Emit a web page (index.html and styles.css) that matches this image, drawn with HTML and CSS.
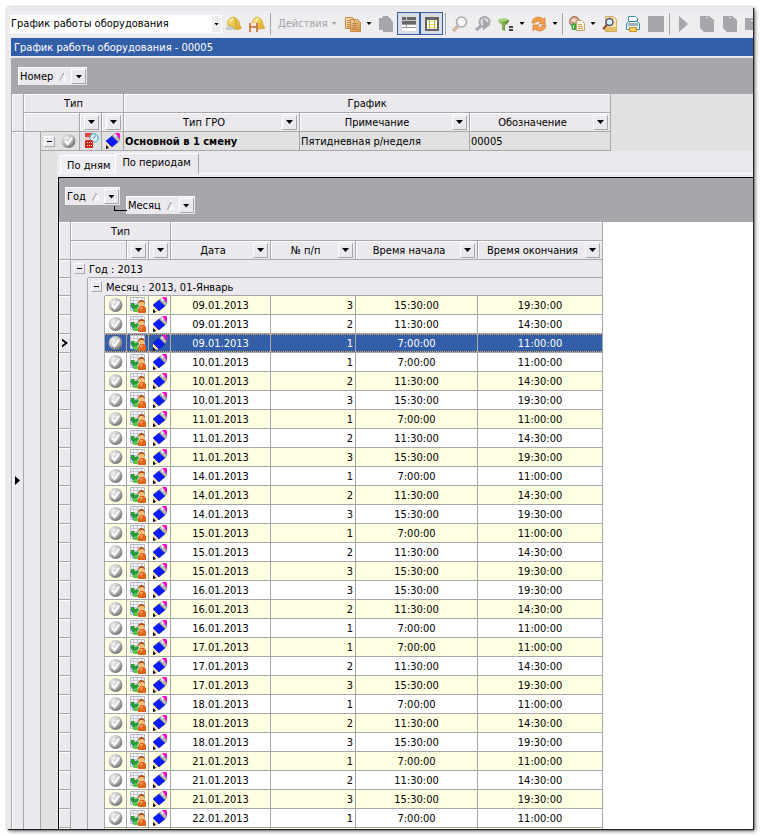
FILE: index.html
```html
<!DOCTYPE html>
<html lang="ru">
<head>
<meta charset="utf-8">
<title>График работы оборудования</title>
<link rel="stylesheet" href="styles.css">
</head>
<body>
<svg class="sprite" aria-hidden="true">
  <defs>
    <radialGradient id="ball" cx=".35" cy=".3" r=".75"><stop offset="0" stop-color="#f4f4f4"/><stop offset=".55" stop-color="#bcbcbc"/><stop offset="1" stop-color="#6c6c6c"/></radialGradient>
    <linearGradient id="gold" x1="0" y1="0" x2="1" y2="1"><stop offset="0" stop-color="#fce9c2"/><stop offset="1" stop-color="#cf9243"/></linearGradient>
    <linearGradient id="leaf" x1="0" y1="0" x2="1" y2="0"><stop offset="0" stop-color="#b6d78a"/><stop offset="1" stop-color="#467a22"/></linearGradient>
    <linearGradient id="dome" x1="0" y1="0" x2="1" y2="1"><stop offset="0" stop-color="#fbe98c"/><stop offset="1" stop-color="#d9a01c"/></linearGradient>
  </defs>
  <symbol id="i-ok" viewBox="0 0 16 16"><circle cx="7.500" cy="8" r="6.900" fill="url(#ball)"/><path d="M4 8l2.600 3.200L11.200 4.500" fill="none" stroke="#fff" stroke-width="2"/></symbol>
  <symbol id="i-plan" viewBox="0 0 16 16"><path fill="#f5f5fb" stroke="#b9b9c6" d="M.5.500h14v13H.5z"/><path stroke="#c9c9d6" d="M3.500 1v12M7.500 1v8M11.500 1v6M1 3.500h13M1 6.500h13"/><path fill="#3c7fd0" d="M0 8h3l5 5v2H4z"/><path fill="#2c9c34" d="M1 6h3l1 2 3-1 1 2-2 3-2-1-1 2-3-4z"/><path fill="#56c940" d="M3 12l3-1 2 2v2H4z"/><circle cx="11.500" cy="6.500" r="2.900" fill="#f6bd79"/><path fill="#a9500f" d="M8 7q0-4 4-4 3 1 3 4l-2-2h-3z"/><path fill="#e2641c" d="M8 16v-4l2-3h4l2 2v5H8z"/><path fill="#f6a55c" d="M10 10h3l-2 4z"/></symbol>
  <symbol id="i-pencil" viewBox="0 0 16 16"><path fill="#f3dcb0" d="M1 8l6 6-6 2z"/><path fill="#0a1cff" stroke="#000080" stroke-width=".5" d="M1 8l6-5 6 6-6 5z"/><path fill="#b9b9c1" stroke="#444" stroke-width=".5" d="M7 3l3-2 5 5-2 3z"/><path fill="#fff" d="M9 2l1-1 2 2-1 1z"/><path fill="#f0c" d="M10 0h4l1 1v5z"/><path fill="#000" d="M1 12l3 3-3 1z"/></symbol>
  <symbol id="i-type" viewBox="0 0 16 16"><path fill="#e0453c" d="M2 0h7v4H2z"/><path fill="#f9b9b1" d="M3 4h6v2H3z"/><circle cx="11" cy="5" r="4" fill="#e2f5fa" stroke="#62bfd2" stroke-width="1.400"/><path stroke="#1a6f94" fill="none" d="M10.500 5.500l2-3"/><path fill="#d5231b" d="M2 8l1-1h6l1 1v7H2z"/><path stroke="#fff" stroke-dasharray="1 1" d="M4 9.500h5M4 12.500h5"/></symbol>
  <symbol id="i-helmet" viewBox="0 0 16 16"><path fill="#c5ccd0" d="M0 11l7-2 4 4-2 1H0z"/><path fill="url(#dome)" stroke="#d5a528" stroke-width=".8" d="M1.500 9q0-7 6-8 6 2 6 8l2 3-3 1.500q-5 0-6-3z"/><path stroke="#fff4b0" stroke-width="1.500" fill="none" d="M4 6q1-2 3-3"/><path stroke="#c28b13" stroke-width=".8" fill="none" d="M8 2q3 3 2 8"/></symbol>
  <symbol id="i-helmet2" viewBox="0 0 16 16"><path fill="url(#dome)" stroke="#d5a528" stroke-width=".8" d="M3 9q0-7 5.500-8 5.500 2 5.500 8l2 3-6 1z"/><path stroke="#fff4b0" stroke-width="1.500" fill="none" d="M7 6q0-2 2-3"/><path fill="#c88249" d="M0 7h2v3h5V7h2v9H7v-4H2v4H0z"/><path fill="#f7e6d3" d="M2 7h5v3H2z"/></symbol>
  <symbol id="i-copy" viewBox="0 0 16 16"><path fill="url(#gold)" stroke="#c88b42" d="M.5 1.500h7l2 2v9h-9zM5.500 3.500h7l3 3v9h-10z"/><path stroke="#c18c4e" d="M2 4.500h3M2 6.500h3M2 8.500h3M2 10.500h3M7 7.500h6M7 9.500h6M7 11.500h6M7 13.500h6"/></symbol>
  <symbol id="i-paste" viewBox="0 0 16 16"><path fill="#a7a6aa" d="M1 2h3l1-2h5l1 2h2v2l2 2v10H5v-2H1z"/></symbol>
  <symbol id="i-bands" viewBox="0 0 16 16"><path fill="#686868" d="M1 1h14v7H1z"/><path fill="#fff" d="M1 8h14v7H1z"/><path stroke="#c7c7c7" d="M1 4.500h14M5.500 1v3"/><path stroke="#999" d="M1 8.500h14M1 11.500h14M5.500 8v3"/></symbol>
  <symbol id="i-grid" viewBox="0 0 16 16"><path fill="#fff" stroke="#666" stroke-width="2" d="M2 2h12v12H2z"/><path fill="#666" d="M1 1h14v3H1z"/><path stroke="#eded40" d="M3 5.500h10M3 8.500h10M3 11.500h10"/><path stroke="#aaa" d="M5.500 4v9M10.500 4v9"/></symbol>
  <symbol id="i-find" viewBox="0 0 16 16"><circle cx="9.500" cy="6" r="5" fill="#f7f7f7" stroke="#aaa" stroke-width="1.600"/><path stroke="#a9947f" stroke-width="3" d="M1 15l4.500-4.500"/><path stroke="#f6c99e" stroke-width="1.500" d="M1 15l4-4"/></symbol>
  <symbol id="i-findnext" viewBox="0 0 16 16"><circle cx="9.500" cy="6" r="5" fill="#ddd" stroke="#a7a6aa" stroke-width="2"/><path stroke="#a7a6aa" stroke-width="3" d="M1 14l5-4"/><path fill="#a7a6aa" d="M8 2l6 6-6 7z"/></symbol>
  <symbol id="i-funnel" viewBox="0 0 16 16"><path fill="url(#leaf)" d="M0 4q5-3 11 0 0 3-4 5v6l-3-1V9Q0 7 0 4z"/><ellipse cx="5.500" cy="4" rx="4.500" ry="1.400" fill="#a9d873"/><path fill="#444" d="M11 10h4v2h-4zM11 13h4v2h-4z"/></symbol>
  <symbol id="i-refresh" viewBox="0 0 16 16"><path fill="#f4a24b" stroke="#cf762b" stroke-width=".7" d="M1 7q0-5 6-6 3 0 5 2l2-1v6H8l2-2q-3-2-6 1zM15 9q0 5-6 6-3 0-5-2l-2 2V9h6l-2 2q3 2 6-2z"/></symbol>
  <symbol id="i-report" viewBox="0 0 16 16"><circle cx="5.500" cy="5.500" r="5" fill="#dba690" stroke="#a7604b"/><path fill="#f6dccb" d="M2 4q3-3 6 0L5 6z"/><path fill="#3fa73b" d="M2 8l3-1 2 1v6H3z"/><path fill="#c4eea8" d="M4 9h1v4H4z"/><path fill="#fbf4de" stroke="#b8a374" d="M7.500 4.500h5l3 3v7h-8z"/><path stroke="#cda75e" d="M9 8.500h4M9 10.500h5M9 12.500h5"/></symbol>
  <symbol id="i-preview" viewBox="0 0 16 16"><path fill="#fae3ac" stroke="#cfab68" d="M3.500.500h8l3 3v12h-11z"/><path fill="#e9bd64" d="M3 11h11v4H2z"/><circle cx="7.500" cy="6" r="3.500" fill="#d8f0ff" stroke="#555b70" stroke-width="1.500"/><path stroke="#8b4329" stroke-width="2" d="M1 13l4-4"/></symbol>
  <symbol id="i-print" viewBox="0 0 16 16"><path fill="#fff" stroke="#3b8eb0" d="M3.500 6V.500h7l2 2V6"/><path fill="#e6f1f6" stroke="#3b8eb0" d="M1.500 7.500l2-2h9l2 2v6h-13z"/><path fill="#a2b0b8" d="M3 7h10v3H3z"/><path fill="#f9cd61" stroke="#cf9222" d="M4.500 11.500h7v4h-7z"/></symbol>
  <symbol id="i-square" viewBox="0 0 16 16"><path fill="#a7a6aa" d="M0 0h16v16H0z"/></symbol>
  <symbol id="i-play" viewBox="0 0 16 16"><path fill="#a7a6aa" d="M3 0l9 8-9 8z"/></symbol>
  <symbol id="i-sheet" viewBox="0 0 16 16"><path fill="#a7a6aa" d="M1 0h9l5 4v12H5l-4-4z"/><path fill="#eee" d="M7 1h2L8 3z"/></symbol>
  <symbol id="i-calendar" viewBox="0 0 16 16"><path fill="#a7a6aa" d="M0 2h16v12H0z"/><path stroke="#eee" d="M6 4.500h8"/></symbol>
</svg>

<main class="window">
  <div class="remnant"></div>
  <header class="toolbar">
    <div class="picker">
      <select aria-label="Форма"><option>График работы оборудования</option></select>
      <span class="picker-arrow"></span>
    </div>
    <button class="tool" aria-label="Оборудование"><svg><use href="#i-helmet"/></svg></button>
    <button class="tool" aria-label="Сохранить"><svg><use href="#i-helmet2"/></svg></button>
    <span class="sep"></span>
    <button class="actions" disabled>Действия</button>
    <button class="tool" aria-label="Копировать"><svg><use href="#i-copy"/></svg></button>
    <button class="drop" aria-label="Варианты копирования"></button>
    <button class="tool" aria-label="Вставить"><svg><use href="#i-paste"/></svg></button>
    <button class="tool pressed" aria-label="Группы"><svg><use href="#i-bands"/></svg></button>
    <button class="tool pressed" aria-label="Таблица"><svg><use href="#i-grid"/></svg></button>
    <span class="sep"></span>
    <button class="tool" aria-label="Найти"><svg><use href="#i-find"/></svg></button>
    <button class="tool" aria-label="Найти далее"><svg><use href="#i-findnext"/></svg></button>
    <button class="tool" aria-label="Фильтр"><svg><use href="#i-funnel"/></svg></button>
    <button class="drop" aria-label="Варианты фильтра"></button>
    <button class="tool" aria-label="Обновить"><svg><use href="#i-refresh"/></svg></button>
    <button class="drop" aria-label="Варианты обновления"></button>
    <span class="sep"></span>
    <button class="tool" aria-label="Отчёт"><svg><use href="#i-report"/></svg></button>
    <button class="drop" aria-label="Отчёты"></button>
    <button class="tool" aria-label="Просмотр"><svg><use href="#i-preview"/></svg></button>
    <button class="tool" aria-label="Печать"><svg><use href="#i-print"/></svg></button>
    <button class="tool" aria-label="Стоп"><svg><use href="#i-square"/></svg></button>
    <span class="sep"></span>
    <button class="tool" aria-label="Пуск"><svg><use href="#i-play"/></svg></button>
    <button class="tool" aria-label="Лист"><svg><use href="#i-sheet"/></svg></button>
    <button class="tool" aria-label="Документ"><svg><use href="#i-sheet"/></svg></button>
    <button class="tool" aria-label="Календарь"><svg><use href="#i-calendar"/></svg></button>
  </header>

  <section class="document">
    <h1 class="title">График работы оборудования - 00005</h1>
    <div class="group-panel">
      <div class="chip">Номер<i class="sort"></i><button class="filter" aria-label="Фильтр: Номер"></button></div>
    </div>

    <div class="master">
      <table class="grid">
        <colgroup><col class="w12"><col class="w17"><col class="w39"><col class="w22"><col class="w22"><col class="w176"><col class="w170"><col class="w141"></colgroup>
        <thead>
          <tr><th rowspan="2"></th><th colspan="4">Тип</th><th colspan="3">График</th></tr>
          <tr>
            <th colspan="2"></th>
            <th class="col"><div class="head"><button class="filter" aria-label="Фильтр"></button></div></th>
            <th class="col"><div class="head"><button class="filter" aria-label="Фильтр"></button></div></th>
            <th class="col"><div class="head"><span>Тип ГРО</span><button class="filter" aria-label="Фильтр: Тип ГРО"></button></div></th>
            <th class="col"><div class="head"><span>Примечание</span><button class="filter" aria-label="Фильтр: Примечание"></button></div></th>
            <th class="col"><div class="head"><span>Обозначение</span><button class="filter" aria-label="Фильтр: Обозначение"></button></div></th>
          </tr>
        </thead>
        <tbody>
          <tr class="record">
            <td class="indent lit"></td><td class="indent"></td>
            <td class="pic"><div class="node"><button class="toggle" aria-label="Свернуть"></button><svg class="ico"><use href="#i-ok"/></svg></div></td>
            <td class="pic"><svg class="ico"><use href="#i-type"/></svg></td>
            <td class="pic"><svg class="ico"><use href="#i-pencil"/></svg></td>
            <td class="strong">Основной в 1 смену</td><td>Пятидневная р/неделя</td><td>00005</td>
          </tr>
        </tbody>
      </table>
    </div>

    <div class="detail">
      <div class="gutter current"></div>
      <div class="gutter"></div>
      <div class="gutter shade"></div>
      <div class="pane">
        <div class="tabs" role="tablist">
          <button class="tab" role="tab">По дням</button>
          <button class="tab active" role="tab" aria-selected="true">По периодам</button>
        </div>
        <div class="sheet">
          <div class="group-panel nested">
            <div class="chip">Год<i class="sort"></i><button class="filter" aria-label="Фильтр: Год"></button></div>
            <div class="chip child">Месяц<i class="sort"></i><button class="filter" aria-label="Фильтр: Месяц"></button></div>
          </div>
          <table class="grid">
            <colgroup><col class="w12"><col class="w17"><col class="w17"><col class="w22"><col class="w22"><col class="w22"><col class="w100"><col class="w85"><col class="w122"><col class="w125"></colgroup>
            <thead>
              <tr><th rowspan="2"></th><th colspan="5">Тип</th><th colspan="4"></th></tr>
              <tr>
                <th colspan="3"></th>
                <th class="col"><div class="head"><button class="filter" aria-label="Фильтр"></button></div></th>
                <th class="col"><div class="head"><button class="filter" aria-label="Фильтр"></button></div></th>
                <th class="col"><div class="head"><span>Дата</span><button class="filter" aria-label="Фильтр: Дата"></button></div></th>
                <th class="col"><div class="head"><span>№ п/п</span><button class="filter" aria-label="Фильтр: № п/п"></button></div></th>
                <th class="col"><div class="head"><span>Время начала</span><button class="filter" aria-label="Фильтр: Время начала"></button></div></th>
                <th class="col"><div class="head"><span>Время окончания</span><button class="filter" aria-label="Фильтр: Время окончания"></button></div></th>
              </tr>
            </thead>
            <tbody id="rows">
              <tr class="group"><td class="mark"></td><td class="fold"><button class="toggle" aria-label="Свернуть"></button></td><td colspan="8">Год : 2013</td></tr>
              <tr class="group"><td class="mark"></td><td class="indent"></td><td class="fold"><button class="toggle" aria-label="Свернуть"></button></td><td colspan="7">Месяц : 2013, 01-Январь</td></tr>
            </tbody>
          </table>
        </div>
      </div>
    </div>
  </section>
</main>
<script src="script.js"></script>
</body>
</html>
```
FILE: styles.css
```css
* { box-sizing: border-box; }

body {
  margin: 0;
  padding: 7px;
  height: 100vh;
  overflow: hidden;
  background: #fff;
  color: #000;
  font: 11px/18px "DejaVu Sans Condensed", "DejaVu Sans", sans-serif;
}

button, select { font: inherit; color: inherit; padding: 0; margin: 0; border: 0; border-radius: 0; background: none; }
.sprite { position: absolute; width: 0; height: 0; }

.window {
  display: flex;
  flex-direction: column;
  height: 100%;
  overflow: hidden;
  background: #ebe9ed;
  box-shadow: 1px 1px 1px #222, 2px 2px 4px #666, 0 0 3px #ddd;
}

.remnant { flex: none; height: 4px; }

.toolbar {
  flex: none;
  display: flex;
  align-items: center;
  height: 25px;
  padding-left: 3px;
  background: #eeedf0;
  overflow: hidden;
}
.toolbar > * { flex: none; }

.picker { display: flex; position: relative; width: 212px; height: 18px; background: #fff; }
.picker select { appearance: none; width: 100%; padding-left: 1px; }
.picker-arrow { position: absolute; top: 1px; right: 1px; bottom: 1px; width: 9px; background: #eeedf0; pointer-events: none; }

.picker-arrow::after, .drop::after, .actions::after {
  content: "";
  display: block;
  width: 5px;
  height: 3px;
  background: #000;
  clip-path: polygon(0 0, 100% 0, 50% 100%);
}
.picker-arrow::after { margin: 7px auto 0; }

.tool { display: flex; align-items: center; justify-content: center; width: 23px; height: 23px; }
.tool svg { width: 16px; height: 16px; }
.pressed { border: 1px solid #335ea8; background: #dadde6; }
.drop { display: flex; align-items: center; justify-content: center; width: 10px; height: 22px; }
.sep { width: 1px; height: 22px; margin: 0 2px; background: #a7a6aa; }
.actions { display: flex; align-items: center; gap: 4px; width: 68px; padding-left: 5px; color: #a7a6aa; }
.actions::after { background: #a7a6aa; }

.document { flex: 1; min-height: 0; display: flex; flex-direction: column; margin: 2px 0 0 4px; }

.title { flex: none; margin: 0 0 2px; padding: 2px 3px 0; background: #335ea8; color: #fff; font-size: 11px; font-weight: normal; line-height: 16px; }

.group-panel { flex: none; display: flex; align-items: flex-start; gap: 6px; height: 36px; padding: 9px 7px; background: #a7a6aa; }
.nested { height: 44px; padding: 9px 6px; }
.chip { display: flex; align-items: center; position: relative; height: 18px; padding: 0 1px; background: #ebe9ed; border: solid #fff; border-width: 1px 0 0 1px; line-height: 17px; }
.child { margin-top: 9px; }
.child::before { content: ""; position: absolute; left: -13px; top: 9px; width: 12px; height: 4px; border: solid #000; border-width: 0 0 1px 1px; }
.sort { width: 8px; height: 8px; margin: 0 4px 0 6px; background: linear-gradient(116deg, #a7a6aa 45%, #fff 45%); clip-path: polygon(50% 0, 100% 100%, 0 100%, 20% 80%, 75% 85%, 50% 30%, 15% 100%, 0 100%); }

.filter { flex: none; display: flex; align-items: center; justify-content: center; width: 15px; height: 15px; border: 1px solid #fff; border-right-color: #a7a6aa; border-bottom-color: #a7a6aa; background: #ebe9ed; }
.filter::after { content: ""; width: 7px; height: 4px; background: #000; clip-path: polygon(0 0, 100% 0, 50% 100%); }

.master { flex: none; padding-left: 1px; background: #e1e1e1; box-shadow: inset 1px 0 #a7a6aa; }
.grid { table-layout: fixed; border-collapse: separate; border-spacing: 0; width: 0; }
.grid th, .grid td { height: 19px; padding: 2px 0 0; border: solid #a7a6aa; border-width: 0 1px 1px 0; line-height: 16px; white-space: nowrap; overflow: hidden; font-weight: normal; }
.grid th { background: #ebe9ed; box-shadow: inset 1px 1px #fff; text-align: center; }
.grid .col { padding: 0; }
.head { display: flex; align-items: center; height: 18px; padding-right: 2px; justify-content: flex-end; }
.head span { flex: 1; padding: 2px 0 0 2px; }
.w12 { width: 12px; } .w17 { width: 17px; } .w22 { width: 22px; } .w39 { width: 39px; }
.w85 { width: 85px; } .w100 { width: 100px; } .w122 { width: 122px; } .w125 { width: 125px; }
.w141 { width: 141px; } .w170 { width: 170px; } .w176 { width: 176px; }

.grid .record td { background: #e1e1e1; padding-left: 1px; }
.grid .record .strong { font-weight: bold; }
.grid .record .indent, .grid .indent { background: #ebe9ed; border-bottom-width: 0; padding: 0; }
.grid .lit { box-shadow: inset 1px 1px #fff; }
.grid .record .pic, .grid .pic { padding: 0; }
.node { display: flex; align-items: center; justify-content: space-between; padding: 0 2px 0 3px; }
.ico { display: block; width: 16px; height: 16px; margin: 1px auto; }
.node .ico { margin: 1px 0; }

.toggle { display: flex; align-items: center; justify-content: center; width: 11px; height: 11px; border: 1px solid #fff; border-right-color: #a7a6aa; border-bottom-color: #a7a6aa; background: #ebe9ed; }
.toggle::after { content: ""; width: 5px; height: 1px; background: #000; }

.detail { flex: 1; min-height: 0; display: flex; padding-left: 1px; box-shadow: inset 1px 0 #a7a6aa; }
.gutter { flex: none; width: 17px; border-right: 1px solid #a7a6aa; }
.current { display: flex; align-items: center; width: 12px; padding: 0 0 19px 3px; box-shadow: inset 1px 0 #fff; }
.current::after { content: ""; width: 5px; height: 9px; background: #000; clip-path: polygon(0 0, 100% 50%, 0 100%); }
.shade { background: #e1e1e1; border-right-color: #ebe9ed; }

.pane { flex: 1; min-width: 0; display: flex; flex-direction: column; }
.tabs { flex: none; display: flex; align-items: flex-end; height: 26px; padding: 0 2px 3px; background: linear-gradient(#fff, #fff) 0 22px / 100% 1px no-repeat; }
.tab { height: 19px; padding: 1px 5px 0 6px; border: solid #fff; border-width: 1px 0 0 1px; background: #f0eff2; line-height: 16px; }
.tab.active { height: 21px; padding: 0 7px 2px 6px; background: #ebe9ed; border-right: 1px solid #a7a6aa; }
.sheet { flex: 1; min-height: 0; overflow: hidden; border: solid #000; border-width: 1px 0 0 1px; background: #fff; }

#rows td { text-align: center; }
#rows .group td { height: 18px; background: #ebe9ed; line-height: 15px; text-align: left; }
#rows .group .fold { border-width: 0; padding: 0 0 1px 3px; }
#rows .group td:last-child { padding-left: 1px; }
#rows .mark { background: #ebe9ed; box-shadow: inset 1px 1px #fff; }
#rows .num { text-align: right; padding-right: 2px; }
#rows .odd td:not(.mark, .indent) { background-color: #ffffe1; }
#rows .selected td:not(.mark, .indent) {
  color: #fff;
  background: repeating-linear-gradient(90deg, #e3a34c 0 1px, #335ea8 1px 2px) 0 0 / 100% 1px no-repeat, repeating-linear-gradient(90deg, #e3a34c 0 1px, #335ea8 1px 2px) 0 100% / 100% 1px no-repeat, #335ea8;
}
#rows .selected .mark::after { content: ""; display: block; width: 6px; height: 9px; margin: 0 0 2px 3px; background: #000; clip-path: polygon(0 0, 100% 50%, 0 100%, 0 75%, 50% 50%, 0 25%); }
```
FILE: script.js
```js
const shifts = { 1: ["7:00:00", "11:00:00"], 2: ["11:30:00", "14:30:00"], 3: ["15:30:00", "19:30:00"] };
const days = [
  ["09", [3, 2, 1]], ["10", [1, 2, 3]], ["11", [1, 2, 3]], ["14", [1, 2, 3]], ["15", [1, 2, 3]],
  ["16", [3, 2, 1]], ["17", [1, 2, 3]], ["18", [1, 2, 3]], ["21", [1, 2, 3]], ["22", [1]]
];
const selectedIndex = 2;
const icon = name => `<td class="pic"><svg class="ico"><use href="#i-${name}"/></svg></td>`;
const lead = `<td class="mark"></td><td class="indent"></td><td class="indent"></td>`;

const rows = days.flatMap(([day, numbers]) => numbers.map(n => [day, n]));
const html = rows.map(([day, n], i) => {
  const kind = i === selectedIndex ? "selected" : i % 2 ? "even" : "odd";
  return `<tr class="${kind}">${lead}` + icon("ok") + icon("plan") + icon("pencil") +
    `<td>${day}.01.2013</td><td class="num">${n}</td><td>${shifts[n][0]}</td><td>${shifts[n][1]}</td></tr>`;
});
// blank row that closes the list
html.push(`<tr class="odd">${lead}${"<td></td>".repeat(7)}</tr>`);
document.getElementById("rows").insertAdjacentHTML("beforeend", html.join(""));
```
